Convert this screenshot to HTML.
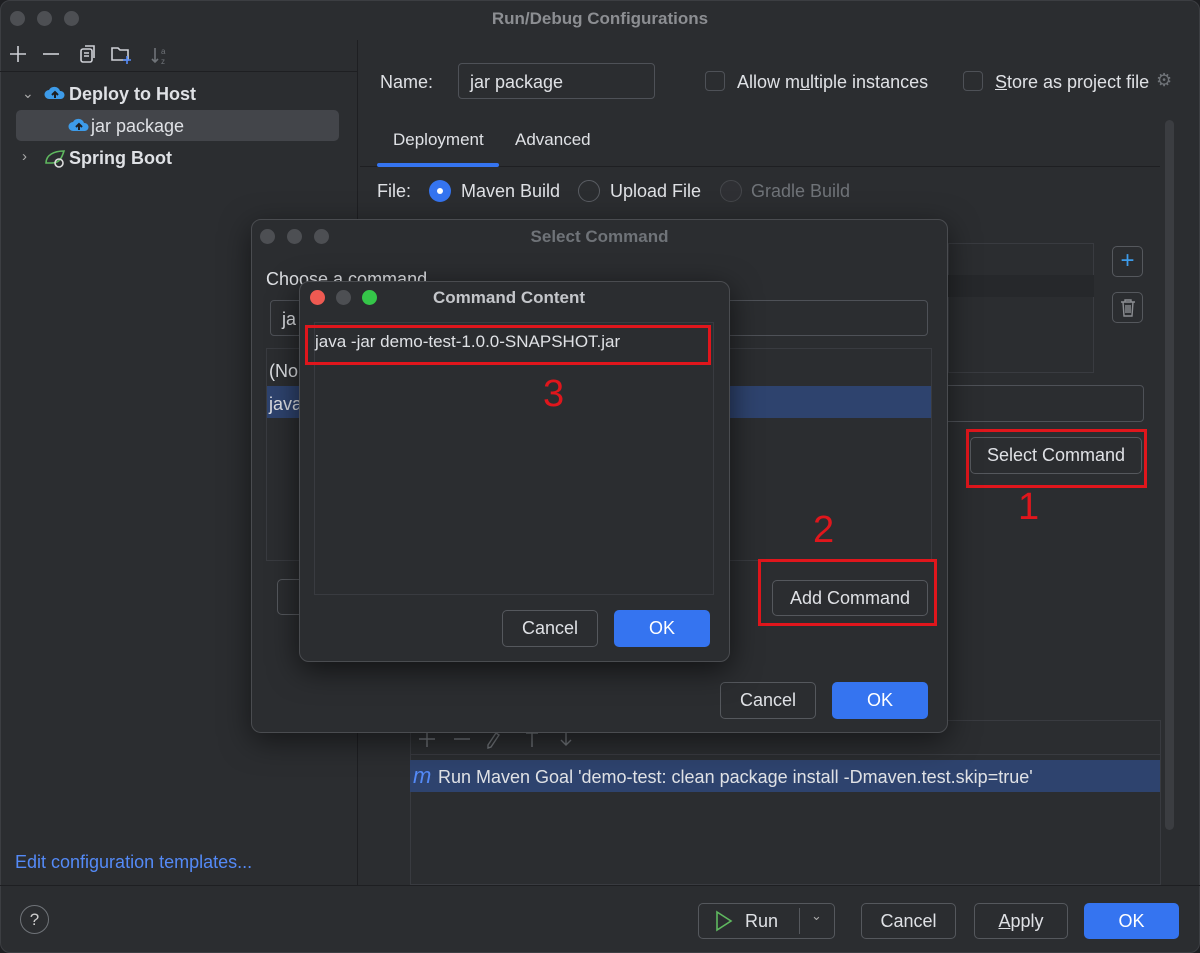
<!DOCTYPE html>
<html><head><meta charset="utf-8"><style>
*{box-sizing:border-box;margin:0;padding:0}
body{width:1200px;height:953px;background:#1e1f22;font-family:"Liberation Sans",sans-serif;color:#dfe1e5;font-size:18px;position:relative;overflow:hidden}
.a{position:absolute}
.win{left:0;top:0;width:1200px;height:953px;background:#2b2d30;border-radius:10px;border:1px solid #3c3e42}
.t{position:absolute;white-space:nowrap;line-height:1}
.btn{position:absolute;border:1px solid #55585d;border-radius:5px;background:#2b2d30;text-align:center;color:#dfe1e5;font-size:18px}
.blue{background:#3574f0;border-color:#3574f0;color:#fff}
.red{position:absolute;border:3px solid #e0161c}
.dot{position:absolute;width:15px;height:15px;border-radius:50%;background:#4d4f53}
.num{position:absolute;color:#e0161c;font-size:38px;line-height:1}
.field{position:absolute;border:1px solid #4e5157;border-radius:4px}
</style></head><body>
<div class="a win"></div>
<div class="dot" style="left:10px;top:11px"></div><div class="dot" style="left:37px;top:11px"></div><div class="dot" style="left:64px;top:11px"></div>
<div class="t" style="left:0;width:1200px;text-align:center;top:10px;font-weight:bold;color:#8c8e92;font-size:17px">Run/Debug Configurations</div>
<div class="a" style="left:357px;top:40px;width:1px;height:845px;background:#1e1f22"></div>
<div class="a" style="left:0;top:71px;width:357px;height:1px;background:#1e1f22"></div>
<svg class="a" style="left:6px;top:42px" width="170" height="26" fill="none" stroke="#ced0d6" stroke-width="1.6">
<path d="M4 12h16M12 4v16"/><path d="M37 12h16"/>
<rect x="75" y="7" width="11" height="13" rx="2"/><path d="M79 4h9v12M78 11h5M78 14h5"/>
<path d="M106 6h6l2 2h8v10h-16z"/><path d="M121 14v8M117 18h8" stroke="#548af7"/>
<path d="M149 6v14M146 17l3 3 3-3" stroke="#6f7378"/><text x="155" y="12" font-size="8" fill="#6f7378" stroke="none">a</text><text x="155" y="22" font-size="8" fill="#6f7378" stroke="none">z</text>
</svg>
<div class="t" style="left:22px;top:86px;color:#aaa;font-size:14px">⌄</div>
<svg class="a" style="left:44px;top:84px" width="22" height="18"><path d="M5 15a4.5 4.5 0 0 1 0-9 6 6 0 0 1 11 1 4 4 0 0 1 1 8z" fill="#3d9be9"/><path d="M11 14V8M8 11l3-3 3 3" stroke="#1e1f22" stroke-width="2" fill="none"/></svg>
<div class="t" style="left:69px;top:85px;font-weight:bold">Deploy to Host</div>
<div class="a" style="left:16px;top:110px;width:323px;height:31px;background:#43454a;border-radius:5px"></div>
<svg class="a" style="left:68px;top:116px" width="22" height="18"><path d="M5 15a4.5 4.5 0 0 1 0-9 6 6 0 0 1 11 1 4 4 0 0 1 1 8z" fill="#3d9be9"/><path d="M11 14V8M8 11l3-3 3 3" stroke="#1e1f22" stroke-width="2" fill="none"/></svg>
<div class="t" style="left:91px;top:117px">jar package</div>
<div class="t" style="left:22px;top:149px;color:#aaa;font-size:15px">›</div>
<svg class="a" style="left:44px;top:147px" width="24" height="22" fill="none" stroke="#5fb85f" stroke-width="1.6"><path d="M2 16c0-8 8-12 18-12-2 6-4 12-12 12z"/><circle cx="15" cy="16" r="4" stroke="#ddd"/></svg>
<div class="t" style="left:69px;top:149px;font-weight:bold">Spring Boot</div>
<div class="t" style="left:15px;top:853px;color:#548af7">Edit configuration templates...</div>
<div class="t" style="left:380px;top:73px">Name:</div>
<div class="field" style="left:458px;top:63px;width:197px;height:36px"></div>
<div class="t" style="left:470px;top:73px">jar package</div>
<div class="field" style="left:705px;top:71px;width:20px;height:20px"></div>
<div class="t" style="left:737px;top:73px">Allow m<u>u</u>ltiple instances</div>
<div class="field" style="left:963px;top:71px;width:20px;height:20px"></div>
<div class="t" style="left:995px;top:73px"><u>S</u>tore as project file</div>
<div class="t" style="left:1156px;top:71px;color:#6f7378;font-size:18px">⚙</div>
<div class="t" style="left:393px;top:131px;font-size:17px">Deployment</div>
<div class="t" style="left:515px;top:131px;font-size:17px">Advanced</div>
<div class="a" style="left:360px;top:166px;width:800px;height:1px;background:#1e1f22"></div>
<div class="a" style="left:377px;top:163px;width:122px;height:4px;background:#3574f0;border-radius:2px"></div>
<div class="t" style="left:377px;top:182px">File:</div>
<div class="a" style="left:429px;top:180px;width:22px;height:22px;border-radius:50%;background:#3574f0"></div><div class="a" style="left:437px;top:188px;width:6px;height:6px;border-radius:50%;background:#fff"></div>
<div class="t" style="left:461px;top:182px">Maven Build</div>
<div class="a" style="left:578px;top:180px;width:22px;height:22px;border-radius:50%;border:1px solid #5a5d63"></div>
<div class="t" style="left:610px;top:182px">Upload File</div>
<div class="a" style="left:720px;top:180px;width:22px;height:22px;border-radius:50%;border:1px solid #45474b;background:#2f3034"></div>
<div class="t" style="left:751px;top:182px;color:#6f7378">Gradle Build</div>
<div class="a" style="left:1165px;top:120px;width:9px;height:710px;background:#3b3d41;border-radius:5px"></div>
<div class="a" style="left:948px;top:243px;width:146px;height:130px;border:1px solid #393b40;background:#2b2d30"></div>
<div class="a" style="left:948px;top:275px;width:146px;height:22px;background:#26282b"></div>
<div class="btn" style="left:1112px;top:246px;width:31px;height:31px;color:#3d9be9;font-size:24px;line-height:27px">+</div>
<div class="btn" style="left:1112px;top:292px;width:31px;height:31px"></div>
<svg class="a" style="left:1118px;top:297px" width="20" height="22" fill="none" stroke="#8c8e92" stroke-width="1.4"><path d="M3 5h14M7 5V3h6v2M5 5l1 14h8l1-14M8 8v8M10 8v8M12 8v8"/></svg>
<div class="field" style="left:930px;top:385px;width:214px;height:37px"></div>
<div class="btn" style="left:970px;top:437px;width:172px;height:37px;line-height:35px">Select Command</div>
<div class="red" style="left:966px;top:429px;width:181px;height:59px"></div>
<div class="num" style="left:1018px;top:488px">1</div>
<div class="a" style="left:410px;top:720px;width:751px;height:165px;border:1px solid #393b40"></div>
<svg class="a" style="left:416px;top:728px" width="160" height="22" fill="none" stroke="#6f7378" stroke-width="1.4"><path d="M3 11h16M11 3v16M38 11h16M72 17l8-12 3 2-8 12-3 1z M110 5h12M116 5v14M150 3v14M145 12l5 5 5-5"/></svg>
<div class="a" style="left:410px;top:754px;width:751px;height:1px;background:#393b40"></div>
<div class="a" style="left:410px;top:760px;width:750px;height:32px;background:#2e436e"></div>
<div class="t" style="left:413px;top:765px;color:#548af7;font-style:italic;font-size:22px">m</div>
<div class="t" style="left:438px;top:768px">Run Maven Goal 'demo-test: clean package install -Dmaven.test.skip=true'</div>
<div class="a" style="left:0;top:885px;width:1200px;height:1px;background:#1e1f22"></div>
<div class="a" style="left:20px;top:905px;width:29px;height:29px;border-radius:50%;border:1px solid #6f7378;text-align:center;line-height:27px;font-size:17px;color:#ccc">?</div>
<div class="btn" style="left:698px;top:903px;width:137px;height:36px"></div>
<svg class="a" style="left:714px;top:910px" width="20" height="22"><path d="M3 2l14 9-14 9z" fill="none" stroke="#5fb85f" stroke-width="1.6"/></svg>
<div class="t" style="left:745px;top:912px">Run</div>
<div class="a" style="left:799px;top:908px;width:1px;height:26px;background:#55585d"></div>
<div class="t" style="left:811px;top:909px;font-size:13px;color:#aaa">⌄</div>
<div class="btn" style="left:861px;top:903px;width:95px;height:36px;line-height:34px">Cancel</div>
<div class="btn" style="left:974px;top:903px;width:94px;height:36px;line-height:34px"><u>A</u>pply</div>
<div class="btn blue" style="left:1084px;top:903px;width:95px;height:36px;line-height:34px">OK</div>
<div class="a" style="left:251px;top:219px;width:697px;height:514px;background:#2b2d30;border:1px solid #4a4c50;border-radius:10px;box-shadow:0 8px 30px rgba(0,0,0,.5)"></div>
<div class="dot" style="left:260px;top:229px"></div><div class="dot" style="left:287px;top:229px"></div><div class="dot" style="left:314px;top:229px"></div>
<div class="t" style="left:251px;width:697px;text-align:center;top:228px;font-weight:bold;color:#6f7378;font-size:17px">Select Command</div>
<div class="t" style="left:266px;top:270px">Choose a command</div>
<div class="field" style="left:270px;top:300px;width:658px;height:36px"></div>
<div class="t" style="left:282px;top:310px">ja</div>
<div class="a" style="left:266px;top:348px;width:666px;height:213px;border:1px solid #393b40"></div>
<div class="t" style="left:269px;top:362px">(No</div>
<div class="a" style="left:267px;top:386px;width:664px;height:32px;background:#2e436e"></div>
<div class="t" style="left:269px;top:395px">java</div>
<div class="btn" style="left:277px;top:579px;width:60px;height:36px"></div>
<div class="btn" style="left:772px;top:580px;width:156px;height:36px;line-height:34px">Add Command</div>
<div class="red" style="left:758px;top:559px;width:179px;height:67px"></div>
<div class="num" style="left:813px;top:511px">2</div>
<div class="btn" style="left:720px;top:682px;width:96px;height:37px;line-height:35px">Cancel</div>
<div class="btn blue" style="left:832px;top:682px;width:96px;height:37px;line-height:35px">OK</div>
<div class="a" style="left:299px;top:281px;width:431px;height:381px;background:#2b2d30;border:1px solid #4a4c50;border-radius:10px;box-shadow:0 8px 30px rgba(0,0,0,.6)"></div>
<div class="dot" style="left:310px;top:290px;background:#ee5a52"></div><div class="dot" style="left:336px;top:290px"></div><div class="dot" style="left:362px;top:290px;background:#35c649"></div>
<div class="t" style="left:433px;top:289px;font-weight:bold;color:#c4c6ca;font-size:17px">Command Content</div>
<div class="a" style="left:314px;top:322px;width:400px;height:273px;border:1px solid #393b40;background:#2b2d30"></div>
<div class="t" style="left:315px;top:333px;font-size:17px">java -jar demo-test-1.0.0-SNAPSHOT.jar</div>
<div class="red" style="left:305px;top:325px;width:406px;height:40px"></div>
<div class="num" style="left:543px;top:375px">3</div>
<div class="btn" style="left:502px;top:610px;width:96px;height:37px;line-height:35px">Cancel</div>
<div class="btn blue" style="left:614px;top:610px;width:96px;height:37px;line-height:35px">OK</div>
</body></html>
